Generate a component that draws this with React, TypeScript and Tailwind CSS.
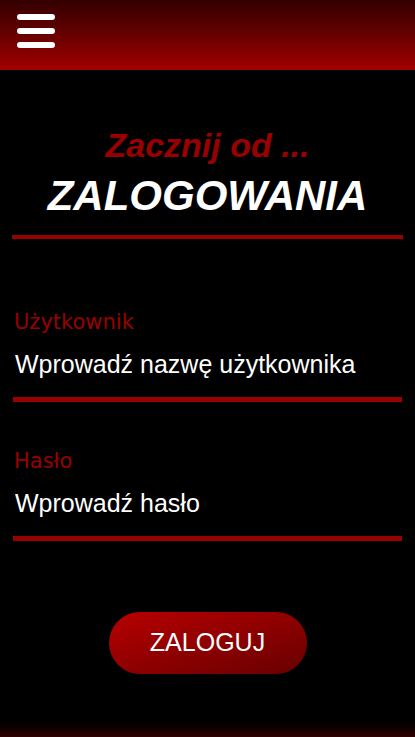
import { useState } from "react"

function MenuIcon() {
  return (
    <button aria-label="Menu" className="flex flex-col gap-[8px] pl-[17px] pt-[14px]">
      <span className="block h-[6px] w-[38px] rounded-full bg-white" />
      <span className="block h-[6px] w-[38px] rounded-full bg-white" />
      <span className="block h-[6px] w-[38px] rounded-full bg-white" />
    </button>
  )
}

function Field({ label, placeholder, type }: { label: string; placeholder: string; type: string }) {
  const [value, setValue] = useState("")
  return (
    <label className="flex flex-col">
      <span className="pl-[14px] text-[21px] leading-[24px] text-[#990000] [font-family:'Comic_Sans_MS','DejaVu_Sans',sans-serif]">
        {label}
      </span>
      <input
        type={type}
        value={value}
        onChange={(e) => setValue(e.target.value)}
        placeholder={placeholder}
        className="mx-[13px] mt-[13px] h-[55px] border-b-[5px] border-[#990000] bg-transparent px-[2px] pb-[16px] text-[25px] text-white outline-none placeholder:text-white"
      />
    </label>
  )
}

export default function App() {
  return (
    <div className="flex min-h-[737px] flex-col bg-black [font-family:'Liberation_Sans',Arial,sans-serif]">
      <header className="h-[70px] bg-gradient-to-b from-[#330000] to-[#a30000]">
        <MenuIcon />
      </header>

      <main className="flex flex-1 flex-col">
        <div className="mx-[12px] mt-[55px] border-b-[4px] border-[#990000] pb-[16px] text-center italic font-bold">
          <h2 className="text-[34px] leading-[40px] text-[#990000]">Zacznij od ...</h2>
          <h1 className="mt-[8px] text-[42px] leading-[46px] text-white">ZALOGOWANIA</h1>
        </div>

        <div className="mt-[71px] flex flex-col gap-[47px]">
          <Field label="Użytkownik" placeholder="Wprowadź nazwę użytkownika" type="text" />
          <Field label="Hasło" placeholder="Wprowadź hasło" type="password" />
        </div>

        <div className="mt-[71px] flex justify-center">
          <button className="h-[62px] w-[198px] rounded-full bg-gradient-to-br from-[#b80000] to-[#680000] text-[25px] text-white">
            ZALOGUJ
          </button>
        </div>
      </main>

      <footer className="mt-auto h-[20px] bg-gradient-to-b from-black to-[#330000]" />
    </div>
  )
}
